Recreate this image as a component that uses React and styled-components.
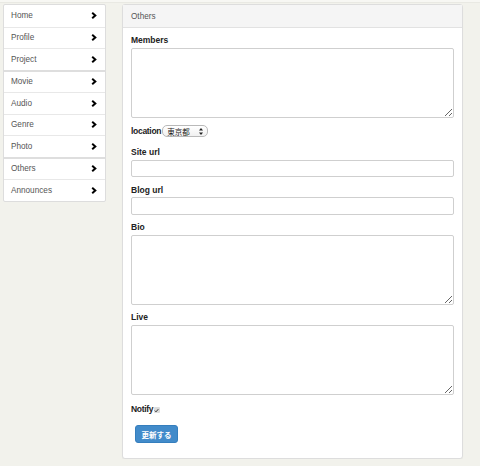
import React from "react";
import styled, { createGlobalStyle } from "styled-components";

const Global = createGlobalStyle`
  html, body { margin: 0; padding: 0; }
  body {
    background: #f2f2ec;
    font-family: "Liberation Sans", Arial, "Noto Sans CJK JP", sans-serif;
    color: #333;
  }
  * { box-sizing: border-box; }
`;

const TopStrip = styled.div`
  height: 3px;
  background: #f7f7f3;
  border-bottom: 1px solid #e9e9e3;
`;

const Page = styled.div`
  display: flex;
  align-items: flex-start;
  padding: 1px 17px 0 3px;
  gap: 16px;
`;

const Sidebar = styled.nav`
  width: 103px;
  flex: none;
  background: #fff;
  border: 1px solid #dddddd;
  border-radius: 2px;
`;

const NavItem = styled.a`
  display: flex;
  align-items: center;
  justify-content: space-between;
  height: ${(p) => (p.$groupStart ? "22.5px" : "21.5px")};
  padding: 0 8px 0 7px;
  font-size: 8.2px;
  color: #555;
  text-decoration: none;
  border-top: ${(p) =>
    p.$first ? "none" : p.$groupStart ? "2px solid #dedede" : "1px solid #e8e8e8"};
`;

const Chevron = () => (
  <svg width="6" height="7" viewBox="0 0 6 7">
    <polyline points="1.2,0.8 4.3,3.5 1.2,6.2" fill="none" stroke="#000" strokeWidth="2" />
  </svg>
);

const Panel = styled.section`
  flex: 1;
  background: #fff;
  border: 1px solid #dddddd;
  border-radius: 3px;
  box-shadow: 0 1px 1px rgba(0, 0, 0, 0.04);
`;

const PanelHeading = styled.div`
  height: 23px;
  display: flex;
  align-items: center;
  padding: 0 8px;
  background: #f5f5f5;
  border-bottom: 1px solid #e2e2e2;
  font-size: 8.2px;
  color: #555;
`;

const PanelBody = styled.form`
  padding: 7px 8px 15px 8px;
`;

const Group = styled.div`
  margin-bottom: ${(p) => p.$mb || "7.6px"};
`;

const Label = styled.label`
  display: block;
  font-size: 8.5px;
  font-weight: bold;
  line-height: 10px;
  margin-bottom: 2.5px;
  color: #222;
`;

const InlineLabel = styled.label`
  font-size: 8.5px;
  font-weight: bold;
  line-height: 12px;
  letter-spacing: -0.3px;
  color: #222;
`;

const TextArea = styled.textarea`
  display: block;
  width: 100%;
  height: 70px;
  border: 1px solid #cfcfcf;
  border-radius: 2px;
  background: #fff;
  resize: both;
  font: inherit;
  outline: none;
`;

const TextInput = styled.input`
  display: block;
  width: 100%;
  height: 17.5px;
  border: 1px solid #cfcfcf;
  border-radius: 2px;
  background: #fff;
  outline: none;
`;

const InlineRow = styled.div`
  display: flex;
  align-items: center;
  margin-bottom: ${(p) => p.$mb || "10px"};
`;

const SelectBox = styled.div`
  display: inline-flex;
  align-items: center;
  justify-content: space-between;
  width: 46px;
  height: 12px;
  margin-left: 1px;
  padding: 0 4px 0 4px;
  border: 1px solid #b9b9b9;
  border-radius: 5px;
  background: linear-gradient(#ffffff, #f0f0f0);
  font-size: 7.5px;
  color: #222;
`;

const SelectArrows = () => (
  <svg width="4" height="7" viewBox="0 0 4 7">
    <polygon points="2,0 4,2.6 0,2.6" fill="#222" />
    <polygon points="0,4.4 4,4.4 2,7" fill="#222" />
  </svg>
);

const CheckBox = styled.span`
  display: inline-flex;
  align-items: center;
  justify-content: center;
  width: 6px;
  height: 6px;
  margin-left: 0.5px;
  margin-top: 2px;
  background: #dcdcdc;
  border-radius: 1px;
`;

const SubmitButton = styled.button`
  margin-left: 4px;
  width: 43px;
  height: 18px;
  padding: 0;
  background: #428bca;
  border: 1px solid #357ebd;
  border-radius: 3px;
  color: #fff;
  font-family: "Liberation Sans", "Noto Sans CJK JP", sans-serif;
  font-size: 7.5px;
  font-weight: bold;
`;

const navGroups = [
  ["Home", "Profile", "Project"],
  ["Movie", "Audio", "Genre", "Photo"],
  ["Others", "Announces"],
];

export default function App() {
  return (
    <>
      <Global />
      <TopStrip />
      <Page>
        <Sidebar>
          {navGroups.map((g, gi) =>
            g.map((name, i) => (
              <NavItem
                key={name}
                href="#"
                $first={gi === 0 && i === 0}
                $groupStart={gi > 0 && i === 0}
              >
                {name}
                <Chevron />
              </NavItem>
            ))
          )}
        </Sidebar>
        <Panel>
          <PanelHeading>Others</PanelHeading>
          <PanelBody onSubmit={(e) => e.preventDefault()}>
            <Group>
              <Label>Members</Label>
              <TextArea />
            </Group>
            <InlineRow>
              <InlineLabel>location</InlineLabel>
              <SelectBox>
                東京都
                <SelectArrows />
              </SelectBox>
            </InlineRow>
            <Group>
              <Label>Site url</Label>
              <TextInput type="text" />
            </Group>
            <Group>
              <Label>Blog url</Label>
              <TextInput type="text" />
            </Group>
            <Group>
              <Label>Bio</Label>
              <TextArea />
            </Group>
            <Group $mb="8.6px">
              <Label>Live</Label>
              <TextArea />
            </Group>
            <InlineRow $mb="8.5px">
              <InlineLabel>Notify</InlineLabel>
              <CheckBox>
                <svg width="5" height="5" viewBox="0 0 5 5">
                  <polyline points="0.8,2.6 2,3.8 4.3,1.2" fill="none" stroke="#333" strokeWidth="1" />
                </svg>
              </CheckBox>
            </InlineRow>
            <SubmitButton type="submit">更新する</SubmitButton>
          </PanelBody>
        </Panel>
      </Page>
    </>
  );
}
